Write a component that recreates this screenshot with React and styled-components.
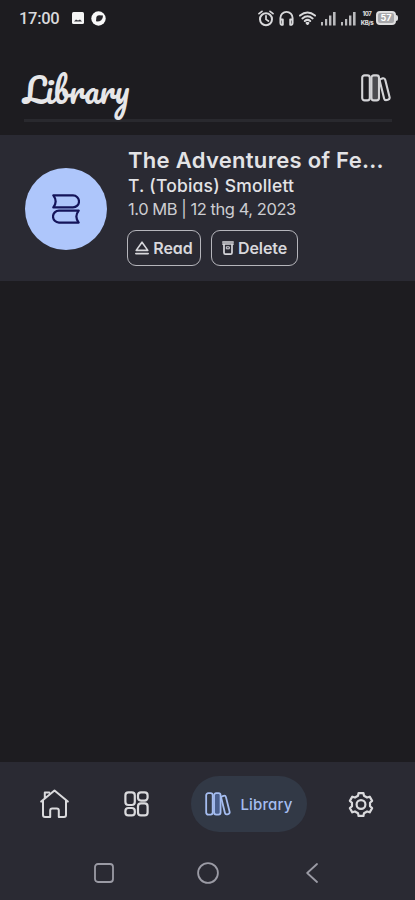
import React from 'react'
import styled, { createGlobalStyle } from 'styled-components'


function BooksIcon({ width, height, fill = 'none' }) {
    return (
        <Icon width={width} height={height} viewBox="0 0 30 28" strokeWidth="2.1">
            <rect x="1.2" y="1.4" width="7.6" height="25" rx="2.4" />
            <rect x="10.4" y="1.4" width="7.6" height="25" rx="2.4" fill={fill} />
            <rect x="20.9" y="4.2" width="5.6" height="22" rx="2.2" transform="rotate(-14 23.7 15.2)" />
        </Icon>
    )
}

// six teeth, the first one pointing up
const gearPoints = [0, 60, 120, 180, 240, 300].flatMap(tooth =>
    [[-19, 9.2], [-12, 11.7], [12, 11.7], [19, 9.2]].map(([offset, radius]) => {
        const angle = (tooth + offset) * Math.PI / 180
        return `${(13 + radius * Math.sin(angle)).toFixed(2)},${(13.5 - radius * Math.cos(angle)).toFixed(2)}`
    })
).join(' ')

function GearIcon() {
    return (
        <Icon width="26" height="27" viewBox="0 0 26 27" strokeWidth="2.2">
            <polygon points={gearPoints} />
            <circle cx="13" cy="13.5" r="4.4" />
        </Icon>
    )
}

function StatusBar() {
    return (
        <Status>
            <Clock>17:00</Clock>
            <StatusLeft>
                <svg width="12" height="12" viewBox="0 0 12 12">
                    <rect width="12" height="12" rx="1.5" fill="#f4f4f4" />
                    <path d="M2 9.5 4 7.4l2 1.1 2-1.1 2 2.1z" fill="#34343a" />
                </svg>
                <svg width="15" height="15" viewBox="0 0 15 15">
                    <circle cx="7.5" cy="7.5" r="7.2" fill="#f8f8f8" />
                    <path d="M5.4 6Q6 4.2 8 4.2L12 4.4Q12 7.6 10.2 9.2 8 10.8 5 10.3z" fill="#26252a" />
                </svg>
            </StatusLeft>
            <StatusRight>
                <Icon width="16" height="17" viewBox="0 0 16 17" strokeWidth="2">
                    <circle cx="8" cy="9.2" r="6" />
                    <path d="M8 5.8v3.6l2.4 1.6M1 3.7 4 1.3M15 3.7 12 1.3" strokeWidth="1.7" />
                </Icon>
                <Icon width="15" height="17" viewBox="0 0 15 17" strokeWidth="1.9">
                    <path d="M1.4 13V8a6.1 6.1 0 0 1 12.2 0v5M1.6 9.5h2.2v5.3H2.4Q1.4 14.5 1.4 13M13.4 9.5h-2.2v5.3h1.4q1-.3 1-1.8" />
                </Icon>
                <Icon width="17" height="14" viewBox="0 0 17 14" strokeWidth="2">
                    <path d="M1 4.6Q8.5-1.6 16 4.6M3.4 7.4Q8.5 3 13.6 7.4M5.8 10Q8.5 7.8 11.2 10" />
                    <path d="M7.6 12h1.8l-.9 1z" />
                </Icon>
                <Signal />
                <Signal />
                <Speed>
                    <span>107</span>
                    <span>KB/s</span>
                </Speed>
                <BatteryWrap>
                    <Battery>57</Battery>
                    <BatteryTip />
                </BatteryWrap>
            </StatusRight>
        </Status>
    )
}

function Signal() {
    return (
        <svg width="15" height="15" viewBox="0 0 15 15" fill="#b9b9bc">
            <rect x="0" y="11" width="2" height="3.5" />
            <rect x="4" y="8" width="2.2" height="6.5" />
            <rect x="8" y="4.5" width="2.4" height="10" />
            <rect x="12" y="1" width="2.6" height="13.5" />
        </svg>
    )
}

function App() {
    return (
        <Screen>
            <GlobalStyle />
            <StatusBar />
            <Header>
                <Title>Library</Title>
                <BooksIcon width="30" height="28" fill="#4a4a4f" />
            </Header>
            <BookRow>
                <Cover>
                    <Icon width="28" height="30" viewBox="0 0 28 30" strokeWidth="2.2">
                        <path d="M1.3 1.4H21a5.8 5.8 0 0 1 0 12H1.3Q6 7.4 1.3 1.4z" />
                        <path d="M26.7 16.6H7a5.8 5.8 0 0 0 0 12H26.7Q22 22.6 26.7 16.6z" />
                    </Icon>
                </Cover>
                <Info>
                    <BookTitle>The Adventures of Fe...</BookTitle>
                    <Author>T. (Tobias) Smollett</Author>
                    <Meta>1.0 MB | 12 thg 4, 2023</Meta>
                    <Actions>
                        <Action $width={74}>
                            <Icon width="14" height="14" viewBox="0 0 14 14" strokeWidth="1.6">
                                <path d="M7 1.2 12.8 9.4H1.2zM.8 12.6h12.4" />
                            </Icon>
                            <ActionLabel>Read</ActionLabel>
                        </Action>
                        <Action $width={87}>
                            <Icon width="12" height="14" viewBox="0 0 12 14" strokeWidth="1.7">
                                <path d="M.9 1h10.2M.9 3h10.2M2 3.5v8.2q0 1.4 1.4 1.4h5.2q1.4 0 1.4-1.4V3.5" />
                                <path d="M4.7 5.8h2.6v2H4.7z" strokeWidth="1" />
                            </Icon>
                            <ActionLabel>Delete</ActionLabel>
                        </Action>
                    </Actions>
                </Info>
            </BookRow>
            <Body />
            <TabBar>
                <Tab>
                    <Icon width="29" height="30" viewBox="0 0 29 30" strokeWidth="2">
                        <path d="M1.2 12.6 14.5 1.6 27.8 12.6M3 11.5V26q0 2 2 2h5.2v-6.6q0-2 2-2h4.6q2 0 2 2V28H24q2 0 2-2V11.5M4.8 9V3.6h4.4" />
                    </Icon>
                </Tab>
                <Tab>
                    <Icon width="25" height="26" viewBox="0 0 25 26" strokeWidth="2.2">
                        <rect x="1.4" y="1.4" width="9.4" height="12.6" rx="3" />
                        <rect x="14" y="1.4" width="9.6" height="8.2" rx="3" />
                        <rect x="1.4" y="17" width="9.4" height="7.4" rx="3" />
                        <rect x="14" y="12.4" width="9.6" height="12" rx="3" />
                    </Icon>
                </Tab>
                <ActiveTab>
                    <BooksIcon width="26" height="24" fill="#4a5f8c" />
                    <TabLabel>Library</TabLabel>
                </ActiveTab>
                <Tab>
                    <GearIcon />
                </Tab>
            </TabBar>
            <SystemBar>
                <Icon width="20" height="20" viewBox="0 0 20 20" strokeWidth="1.8">
                    <rect x="1" y="1" width="18" height="18" rx="3" />
                </Icon>
                <Icon width="22" height="22" viewBox="0 0 22 22" strokeWidth="1.8">
                    <circle cx="11" cy="11" r="9.9" />
                </Icon>
                <Icon width="12" height="20" viewBox="0 0 12 20" strokeWidth="1.8">
                    <path d="M11 1 1.2 10 11 19" />
                </Icon>
            </SystemBar>
        </Screen>
    )
}

const GlobalStyle = createGlobalStyle`
    body {
        margin: 0;
        background: #1d1c20;
    }
    * {
        box-sizing: border-box;
    }
`

const Screen = styled.div`
    width: 415px;
    height: 900px;
    display: flex;
    flex-direction: column;
    overflow: hidden;
    background: #1d1c20;
    color: #e3e3e6;
    font-family: Inter, "Liberation Sans", sans-serif;
    font-feature-settings: "cv11";
    white-space: nowrap;
`

const Icon = styled.svg`
    display: block;
    flex: none;
    fill: none;
    stroke: currentColor;
    stroke-linecap: round;
    stroke-linejoin: round;
`

const Status = styled.div`
    height: 36px;
    flex: none;
    display: flex;
    align-items: center;
    padding: 0 17px 0 19px;
    color: #d9d9db;
`

const Clock = styled.div`
    width: 53px;
    font-family: Roboto, sans-serif;
    font-size: 16.5px;
    font-weight: 500;
    letter-spacing: -0.3px;
`

const StatusLeft = styled.div`
    display: flex;
    align-items: center;
    gap: 7px;
`

const StatusRight = styled.div`
    margin-left: auto;
    display: flex;
    align-items: center;
    gap: 5px;
`

const Speed = styled.div`
    width: 14px;
    display: flex;
    flex-direction: column;
    align-items: center;
    gap: 1px;
    margin: 0 -3px 0 -1px;
    font-size: 6px;
    font-weight: 800;
    line-height: 8px;
    letter-spacing: -0.4px;
`

const BatteryWrap = styled.div`
    display: flex;
    align-items: center;
`

const Battery = styled.div`
    width: 20px;
    height: 14px;
    border: 2px solid #dededf;
    border-radius: 4px;
    background: #a7a7aa;
    color: #fff;
    font-size: 9px;
    font-weight: 700;
    line-height: 10px;
    text-align: center;
`

const BatteryTip = styled.div`
    width: 2px;
    height: 6px;
    border-radius: 0 2px 2px 0;
    background: #dededf;
`

const Header = styled.header`
    height: 86px;
    flex: none;
    display: flex;
    align-items: flex-start;
    justify-content: space-between;
    margin: 0 23px 13px 24px;
    padding: 38px 1px 0 0;
    border-bottom: 3px solid #29292e;
    color: #d4d4d7;
`

const Title = styled.h1`
    margin: -6px 0 0 -1px;
    font-family: Pacifico, "Liberation Serif", cursive;
    font-size: 33px;
    font-weight: 400;
    line-height: 44px;
    color: #e6e6e8;
`

const BookRow = styled.section`
    height: 146px;
    flex: none;
    display: flex;
    padding: 11px 0 0 25px;
    background: #2a2a33;
`

const Cover = styled.div`
    width: 82px;
    height: 82px;
    margin: 22px 20px 0 0;
    display: flex;
    align-items: center;
    justify-content: center;
    border-radius: 50%;
    background: #aec6fb;
    color: #14145a;
`

const Info = styled.div`
    display: flex;
    flex-direction: column;
`

const BookTitle = styled.h2`
    margin: 0 0 0 1px;
    font-size: 22px;
    font-weight: 600;
    line-height: 28px;
    letter-spacing: 0.3px;
`

const Author = styled.div`
    margin-left: 1px;
    font-size: 17.5px;
    font-weight: 500;
    line-height: 24px;
    letter-spacing: 0.2px;
`

const Meta = styled.div`
    margin-left: 1px;
    font-size: 16.5px;
    line-height: 23px;
    letter-spacing: -0.45px;
    color: #cdcdd1;
`

const Actions = styled.div`
    display: flex;
    gap: 10px;
    margin-top: 9px;
`

const Action = styled.button`
    width: ${props => props.$width}px;
    height: 36px;
    display: flex;
    align-items: center;
    justify-content: center;
    gap: 4px;
    padding: 0;
    border: 1.5px solid #b5b5bb;
    border-radius: 9px;
    background: transparent;
    color: #d8d8dc;
    font: inherit;
    font-feature-settings: inherit;
`

const ActionLabel = styled.span`
    font-size: 16px;
    font-weight: 600;
    letter-spacing: -0.1px;
`

const Body = styled.main`
    flex: 1;
`

const TabBar = styled.nav`
    height: 84px;
    flex: none;
    display: grid;
    grid-template-columns: 81px 82px 130px 108px;
    align-items: center;
    padding-left: 14px;
    background: #2a2a33;
`

const Tab = styled.div`
    display: flex;
    justify-content: center;
    color: #dadadd;
`

const ActiveTab = styled.div`
    width: 116px;
    height: 56px;
    margin-left: 14px;
    display: flex;
    align-items: center;
    justify-content: center;
    gap: 9px;
    border-radius: 28px;
    background: #323946;
    color: #a5bdf0;
`

const TabLabel = styled.span`
    font-size: 15px;
    font-weight: 500;
    letter-spacing: 0.15px;
`

const SystemBar = styled.footer`
    height: 54px;
    flex: none;
    display: grid;
    grid-template-columns: repeat(3, 104px);
    justify-content: center;
    justify-items: center;
    align-items: center;
    background: #2a2a33;
    color: #9b9ba5;
`

export default App
